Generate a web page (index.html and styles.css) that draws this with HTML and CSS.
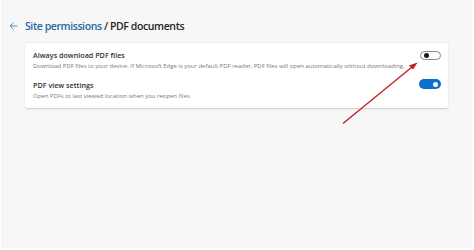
FILE: index.html
```html
<!DOCTYPE html>
<html lang="en">
<head>
<meta charset="utf-8">
<title>PDF documents</title>
<link rel="stylesheet" href="styles.css">
</head>
<body>
<div class="page">
  <header class="header">
    <svg class="back" width="9" height="8" viewBox="0 0 9 8"><path d="M4.5 0.8 L1 4 L4.5 7.2 M1 4 H8.5" fill="none" stroke="#5b8fb9" stroke-width="1"/></svg>
    <h1 class="title"><span class="crumb">Site permissions</span> / PDF documents</h1>
  </header>
  <section class="card">
    <div class="row">
      <div class="text">
        <div class="label">Always download PDF files</div>
        <div class="desc">Download PDF files to your device. If Microsoft Edge is your default PDF reader, PDF files will open automatically without downloading.</div>
      </div>
      <span class="toggle off"><span class="knob"></span></span>
    </div>
    <div class="row">
      <div class="text">
        <div class="label">PDF view settings</div>
        <div class="desc">Open PDFs to last viewed location when you reopen files</div>
      </div>
      <span class="toggle on"><span class="knob"></span></span>
    </div>
  </section>
  <svg class="annot" width="474" height="250" viewBox="0 0 474 250">
    <line x1="343" y1="123.5" x2="412" y2="67" stroke="#c41a22" stroke-width="1.3"/>
    <path d="M417.5 62.5 L409 65.5 L413 69.5 Z" fill="#c41a22"/>
  </svg>
</div>
</body>
</html>
```
FILE: styles.css
```css
html, body { margin: 0; padding: 0; background: #ffffff; }
body { width: 474px; height: 250px; overflow: hidden; font-family: "Open Sans", "Noto Sans", sans-serif; }
.page {
  position: relative;
  margin-left: 1px;
  width: 471px;
  height: 248px;
  background: #f7f7f7;
  box-sizing: border-box;
  padding: 18px 0 0 24px;
}
.header { display: flex; align-items: center; height: 16px; margin-left: -16px; gap: 7px; }
.back { display: block; }
.title { margin: 0; font-size: 10.5px; font-weight: 600; color: #262626; letter-spacing: -0.4px; line-height: 16px; }
.crumb { color: #1f6aa5; }
.card {
  margin-top: 9px;
  width: 423px;
  height: 65px;
  background: #ffffff;
  border-radius: 2px;
  box-shadow: 0 0.5px 1.5px rgba(0,0,0,0.18);
  box-sizing: border-box;
  padding: 6.5px 7px 0 8px;
  display: flex;
  flex-direction: column;
  gap: 8.5px;
}
.row { display: flex; align-items: flex-start; justify-content: space-between; }
.label { font-size: 7.2px; font-weight: 600; color: #333; line-height: 11px; }
.desc { font-size: 6px; color: #7a7a7a; line-height: 9px; margin-top: 1.5px; white-space: nowrap; letter-spacing: -0.02px; }
.toggle { display: block; width: 21px; height: 9px; border-radius: 5px; box-sizing: border-box; position: relative; margin-top: 1.5px; }
.toggle.off { border: 1px solid #8a8a8a; background: #fff; }
.toggle.on { background: #0c6fcf; height: 10px; width: 22px; margin-top: -0.5px; }
.knob { position: absolute; width: 5px; height: 5px; border-radius: 50%; top: 1px; }
.off .knob { left: 2.5px; background: #1a1a1a; }
.on .knob { right: 3px; top: 2.5px; background: #fff; }
.annot { position: absolute; left: -1px; top: 0; pointer-events: none; }
```
